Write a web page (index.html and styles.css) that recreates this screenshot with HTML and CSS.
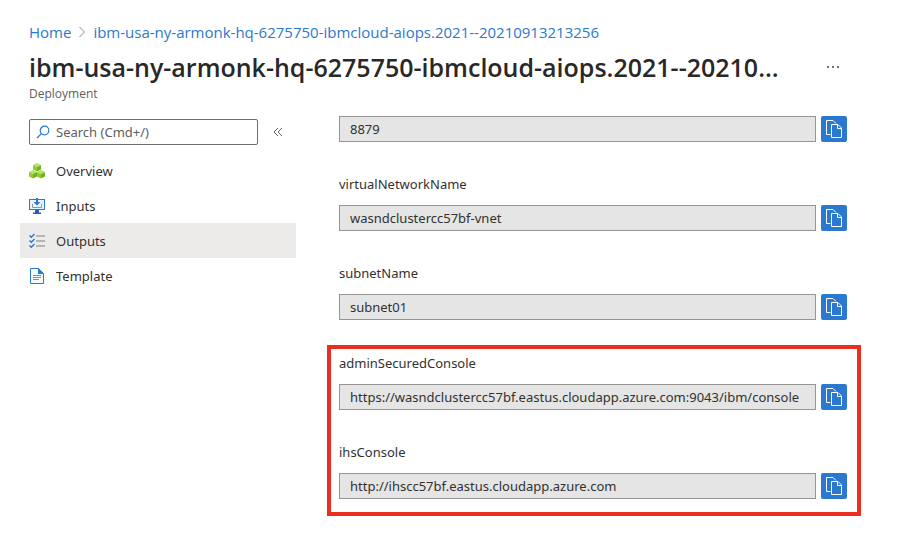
FILE: index.html
```html
<!DOCTYPE html>
<html lang="en">
<head>
<meta charset="utf-8">
<meta name="viewport" content="width=device-width, initial-scale=1">
<title>Deployment outputs</title>
<link rel="stylesheet" href="styles.css">
</head>
<body>
<svg class="defs" width="0" height="0" aria-hidden="true">
  <symbol id="copy" viewBox="0 0 26 26">
    <path d="M9.500 18.500H5.500V4.500H12L15 7.500" />
    <path d="M10.500 8.500H17L20.500 12V21.500H10.500Z" />
    <path d="M16.500 8.500V12.500H20.500" />
  </symbol>
</svg>
<header class="header">
  <nav class="breadcrumb" aria-label="Breadcrumb">
    <a href="#">Home</a>
    <svg class="chevron" viewBox="0 0 8 12" aria-hidden="true"><path d="M1.500 1L6.500 6L1.500 11"/></svg>
    <a href="#">ibm-usa-ny-armonk-hq-6275750-ibmcloud-aiops.2021--20210913213256</a>
  </nav>
  <div class="title-row">
    <h1>ibm-usa-ny-armonk-hq-6275750-ibmcloud-aiops.2021--20210...</h1>
    <button class="more" type="button" aria-label="More"><svg viewBox="0 0 14 4" aria-hidden="true"><circle cx="2" cy="2" r="0.900"/><circle cx="7" cy="2" r="0.900"/><circle cx="12" cy="2" r="0.900"/></svg></button>
  </div>
  <p class="subtitle">Deployment</p>
</header>
<div class="body">
  <aside class="sidebar">
    <div class="search-row">
      <label class="search">
        <svg viewBox="0 0 14 14" aria-hidden="true"><circle cx="8.500" cy="5.500" r="4.300"/><path d="M5.400 8.600L1 13"/></svg>
        <input type="search" placeholder="Search (Cmd+/)" aria-label="Search">
      </label>
      <button class="collapse" type="button" aria-label="Collapse menu"><svg viewBox="0 0 10 10" aria-hidden="true"><path d="M5 1L1 5L5 9M9 1L5 5L9 9"/></svg></button>
    </div>
    <nav class="menu" aria-label="Deployment">
      <a href="#">
        <svg viewBox="0 0 16 16" aria-hidden="true">
          <g id="cube"><path fill="#b4e35c" d="M8 0L12 2L8 4L4 2Z"/><path fill="#8fcb35" d="M4 2L8 4V8.500L4 6.500Z"/><path fill="#74b022" d="M12 2L8 4V8.500L12 6.500Z"/></g>
          <use href="#cube" x="-4" y="7"/><use href="#cube" x="4" y="7"/>
        </svg>
        Overview</a>
      <a href="#">
        <svg viewBox="0 0 16 16" aria-hidden="true">
          <path fill="#2b78d0" d="M0 1H16V12H0Z"/><path fill="#e8f4fd" d="M1 2H15V11H1Z"/>
          <path fill="#1b62b5" d="M6 12H10V14.500H12V16H4V14.500H6Z"/>
          <path fill="#2b78d0" d="M7 0H9V4H11.500L8 7.500L4.500 4H7Z"/>
          <path fill="none" stroke="#8b98a5" d="M3.500 6V9.500H12.500V6"/>
        </svg>
        Inputs</a>
      <a href="#" class="selected" aria-current="page">
        <svg viewBox="0 0 16 16" aria-hidden="true">
          <path fill="none" stroke="#2b78d0" stroke-width="1.400" d="M0.500 2.500L2.300 4.300L5.500 1M0.500 7.500L2.300 9.300L5.500 6M0.500 12.500L2.300 14.300L5.500 11"/>
          <path fill="none" stroke="#a5a5a5" stroke-width="1.500" d="M7 3H16M7 8H16M7 13H16"/>
        </svg>
        Outputs</a>
      <a href="#">
        <svg viewBox="0 0 16 16" aria-hidden="true">
          <path fill="#f4f9fe" stroke="#2b78d0" d="M1.500 0.500H9.500L14.500 5.500V15.500H1.500Z"/>
          <path fill="#2b78d0" d="M9 0L15 6H9Z"/>
          <path fill="none" stroke="#5596dc" d="M4 7.500H12M4 9.500H12M4 11.500H10"/>
        </svg>
        Template</a>
    </nav>
  </aside>
  <main class="outputs">
    <div class="output">
      <div class="value"><input type="text" readonly value="8879" aria-label="Output value"><button class="copy" type="button" aria-label="Copy"><svg aria-hidden="true"><use href="#copy"/></svg></button></div>
    </div>
    <div class="output">
      <label for="vnet">virtualNetworkName</label>
      <div class="value"><input id="vnet" type="text" readonly value="wasndclustercc57bf-vnet"><button class="copy" type="button" aria-label="Copy"><svg aria-hidden="true"><use href="#copy"/></svg></button></div>
    </div>
    <div class="output">
      <label for="subnet">subnetName</label>
      <div class="value"><input id="subnet" type="text" readonly value="subnet01"><button class="copy" type="button" aria-label="Copy"><svg aria-hidden="true"><use href="#copy"/></svg></button></div>
    </div>
    <section class="highlight">
      <div class="output">
        <label for="admin">adminSecuredConsole</label>
        <div class="value"><input id="admin" type="text" readonly value="https://wasndclustercc57bf.eastus.cloudapp.azure.com:9043/ibm/console"><button class="copy" type="button" aria-label="Copy"><svg aria-hidden="true"><use href="#copy"/></svg></button></div>
      </div>
      <div class="output">
        <label for="ihs">ihsConsole</label>
        <div class="value"><input id="ihs" type="text" readonly value="http://ihscc57bf.eastus.cloudapp.azure.com"><button class="copy" type="button" aria-label="Copy"><svg aria-hidden="true"><use href="#copy"/></svg></button></div>
      </div>
    </section>
  </main>
</div>
</body>
</html>
```
FILE: styles.css
```css
* { box-sizing: border-box; }

body {
  margin: 0;
  background: #fff;
  color: #323130;
  font: 13px/20px "Noto Sans", "Open Sans", sans-serif;
}

button { padding: 0; border: 0; background: none; cursor: pointer; }
a { color: inherit; text-decoration: none; }
input { font: inherit; color: inherit; }
svg { display: block; flex: none; }
.defs { position: absolute; }

.header { padding: 22px 57px 0 29px; font-family: "Open Sans", "Noto Sans", sans-serif; }

.breadcrumb { display: flex; align-items: center; gap: 7px; font-size: 15px; white-space: nowrap; }
.breadcrumb a { color: #2b78d0; }
.chevron { width: 8px; height: 12px; fill: none; stroke: #8a8886; }

.title-row { display: flex; align-items: center; justify-content: space-between; margin-top: 7px; }
h1 { margin: 0; font-size: 25px; line-height: 36px; font-weight: 600; white-space: nowrap; color: #292827; }
.more { display: flex; margin-right: 7px; }
.more svg { width: 14px; height: 4px; fill: #323130; }

.subtitle { margin: 0; font-size: 12px; line-height: 18px; color: #605e5c; }

.body { display: flex; align-items: flex-start; padding: 13px 43px 28px 20px; }

.sidebar { flex: none; width: 276px; padding-top: 3px; }
.search-row { display: flex; align-items: center; gap: 15px; padding-left: 9px; }
.search {
  display: flex;
  align-items: center;
  gap: 6px;
  width: 229px;
  height: 26px;
  padding: 0 6px;
  border: 1px solid #6e6d6b;
  border-radius: 2px;
}
.search svg { width: 14px; height: 14px; fill: none; stroke: #2b78d0; stroke-width: 1.2; }
.search input { flex: 1; min-width: 0; padding: 0; border: 0; outline: 0; background: none; }
.search input::placeholder { color: #605e5c; opacity: 1; }
.collapse svg { width: 10px; height: 10px; fill: none; stroke: #605e5c; }

.menu { margin-top: 8px; }
.menu a { display: flex; align-items: center; gap: 11px; height: 35px; padding-left: 9px; }
.menu svg { width: 16px; height: 16px; }
.menu .selected { background: #edebe9; }

.outputs { flex: 1; min-width: 0; display: flex; flex-direction: column; gap: 32px; padding-left: 31px; }
.output { display: flex; flex-direction: column; gap: 11px; }
.outputs > .output { margin: 0 14px 0 12px; }
.value { display: flex; gap: 5px; }
.value input {
  flex: 1;
  min-width: 0;
  height: 26px;
  padding: 0 10px;
  border: 1px solid #979593;
  border-radius: 0;
  background: #e5e5e5;
}
.copy { flex: none; width: 26px; height: 26px; border-radius: 2px; background: #2b78d0; }
.copy svg { width: 26px; height: 26px; fill: none; stroke: #fff; }

.highlight {
  display: flex;
  flex-direction: column;
  gap: 32px;
  margin-top: -7px;
  padding: 4px 10px 13px 8px;
  border: 4px solid #ec2d20;
}
```
